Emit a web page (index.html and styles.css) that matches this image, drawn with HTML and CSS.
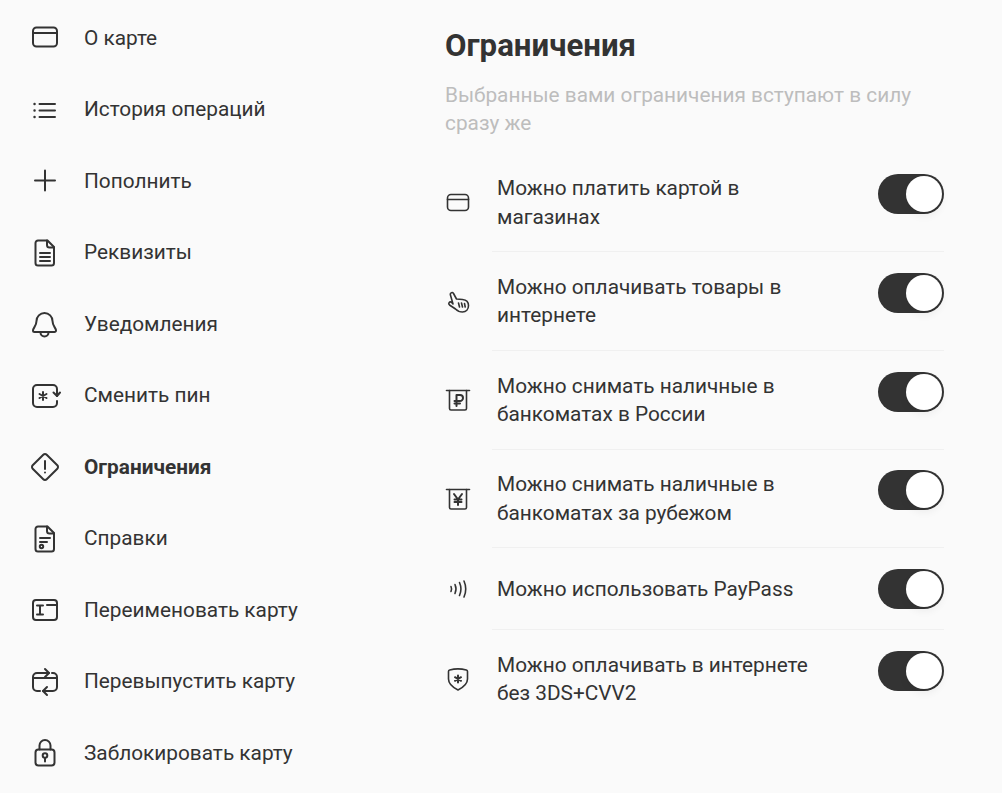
FILE: index.html
```html
<!DOCTYPE html>
<html lang="ru">
<head>
  <meta charset="UTF-8" />
  <title>Ограничения</title>
  <link rel="stylesheet" href="styles.css">
</head>
<body>
  <div class="page">

    <!-- menu -->
    <nav class="menu">
      <a class="menu-item">
        <svg class="icon" viewBox="0 0 28 28"><rect x="2" y="3.500" width="24" height="19" rx="3.500"/><path d="M2 9h24"/></svg>
        <span>О карте</span>
      </a>
      <a class="menu-item">
        <svg class="icon" viewBox="0 0 28 28"><path d="M8.500 8h15.500M8.500 14.500h15.500M8.500 21h15.500"/><path class="dots" d="M3.500 8h.1M3.500 14.500h.1M3.500 21h.1"/></svg>
        <span>История операций</span>
      </a>
      <a class="menu-item">
        <svg class="icon" viewBox="0 0 28 28"><path d="M14 3.500v20M4 13.500h20"/></svg>
        <span>Пополнить</span>
      </a>
      <a class="menu-item">
        <svg class="icon" viewBox="0 0 28 28"><path d="M7 1.500h9.500l6.500 6.500v16a2.500 2.500 0 0 1-2.500 2.500H7A2.500 2.500 0 0 1 4.500 24V4A2.500 2.500 0 0 1 7 1.500z"/><path d="M16 1.500V6a2.500 2.500 0 0 0 2.500 2.500H23M9 14h10M9 18h10M9 22h10"/></svg>
        <span>Реквизиты</span>
      </a>
      <a class="menu-item">
        <svg class="icon" viewBox="0 0 28 28"><path d="M5.500 11a8 8 0 0 1 16 0c0 5 3.500 7 3.500 9.500a1.500 1.500 0 0 1-1.500 1.500h-20A1.500 1.500 0 0 1 2 20.500C2 18 5.500 16 5.500 11z"/><path d="M9.500 22.500a4 4 0 0 0 8 0"/></svg>
        <span>Уведомления</span>
      </a>
      <a class="menu-item">
        <svg class="icon" viewBox="0 0 28 28"><path d="M26 14V7a4 4 0 0 0-4-4H6a4 4 0 0 0-4 4v14a4 4 0 0 0 4 4h16a4 4 0 0 0 4-4v-2"/><path d="M22.500 10.500 26 14l3-3.500"/><path class="thick" d="M12 10v8M8.500 12l7 4M15.500 12l-7 4"/></svg>
        <span>Сменить пин</span>
      </a>
      <a class="menu-item">
        <svg class="icon" viewBox="0 0 28 28"><path d="M12.300 1.700a2.400 2.400 0 0 1 3.400 0l10.600 10.600a2.400 2.400 0 0 1 0 3.400L15.700 26.300a2.400 2.400 0 0 1-3.400 0L1.700 15.700a2.400 2.400 0 0 1 0-3.400z"/><path d="M14 8v8M14 19.500v.1"/></svg>
        <span class="current">Ограничения</span>
      </a>
      <a class="menu-item">
        <svg class="icon" viewBox="0 0 28 28"><path d="M7 1.500h9.500l6.500 6.500v16a2.500 2.500 0 0 1-2.500 2.500H7A2.500 2.500 0 0 1 4.500 24V4A2.500 2.500 0 0 1 7 1.500z"/><path d="M16 1.500V6a2.500 2.500 0 0 0 2.500 2.500H23M9 13h10M9 17h7"/><circle cx="10.500" cy="21.500" r="1.700"/></svg>
        <span>Справки</span>
      </a>
      <a class="menu-item">
        <svg class="icon" viewBox="0 0 28 28"><path d="M26 9V7a3 3 0 0 0-3-3H5a3 3 0 0 0-3 3v14a3 3 0 0 0 3 3h18a3 3 0 0 0 3-3V9H16"/><path d="M6 9.500h6M6 18.500h6M9 9.500v9"/></svg>
        <span>Переименовать карту</span>
      </a>
      <a class="menu-item">
        <svg class="icon" viewBox="0 0 28 28"><path d="M18 5H6a4 4 0 0 0-4 4v10a4 4 0 0 0 4 4h3M12 23h10a4 4 0 0 0 4-4V9a4 4 0 0 0-4-4h-1M2 10h24"/><path d="M14 1l4 4-4 4M16 19l-4 4 4 4"/></svg>
        <span>Перевыпустить карту</span>
      </a>
      <a class="menu-item">
        <svg class="icon" viewBox="0 0 28 28"><rect x="4.500" y="10.500" width="19" height="16" rx="3"/><path d="M8.500 10.500V6.500a5.500 5.500 0 0 1 11 0v4"/><circle cx="14" cy="16.500" r="2.300"/><path d="M14 19v3.500"/></svg>
        <span>Заблокировать карту</span>
      </a>
    </nav>

    <!-- limits -->
    <main class="limits">
      <h1>Ограничения</h1>
      <p class="hint">Выбранные вами ограничения вступают в силу сразу же</p>

      <div class="limit">
        <svg class="limit-icon" viewBox="0 0 24 24"><rect x="1.500" y="3.500" width="21" height="16" rx="3.500"/><path d="M1.500 8.500h21"/></svg>
        <div class="limit-body">
          <div class="limit-text">Можно платить картой в магазинах</div>
          <div class="toggle"><div class="knob"></div></div>
        </div>
      </div>

      <div class="limit">
        <svg class="limit-icon" viewBox="0 0 24 24"><path d="M7 14 4.300 4.500a1.700 1.700 0 0 1 3.200-1L10.500 9l6 .5c3.500.4 6 2.300 6 6 0 4-2.500 6.500-6 6.500-3.500 0-5-1-7-3l-6-4c-1.800-1.500 0-3.800 2-2.800z"/><path d="M12.500 13l1 4M15.500 13l1 4M18.500 13.500l.7 3.500"/></svg>
        <div class="limit-body">
          <div class="limit-text">Можно оплачивать товары в интернете</div>
          <div class="toggle"><div class="knob"></div></div>
        </div>
      </div>

      <div class="limit">
        <svg class="limit-icon" viewBox="0 0 24 24"><path d="M.5 2.500h23"/><path d="M3.500 2.500v18a1.500 1.500 0 0 0 1.500 1.500h14a1.500 1.500 0 0 0 1.500-1.500v-18"/><path class="thick" d="M10.500 18V7h3.500a2.800 2.800 0 0 1 0 6H8.500M8.500 15.500H14"/></svg>
        <div class="limit-body">
          <div class="limit-text">Можно снимать наличные в банкоматах в России</div>
          <div class="toggle"><div class="knob"></div></div>
        </div>
      </div>

      <div class="limit">
        <svg class="limit-icon" viewBox="0 0 24 24"><path d="M.5 2.500h23"/><path d="M3.500 2.500v18a1.500 1.500 0 0 0 1.500 1.500h14a1.500 1.500 0 0 0 1.500-1.500v-18"/><path class="thick" d="M8 7l4 5.500L16 7M12 12.500V18M8.500 12.500h7M8.500 15h7"/></svg>
        <div class="limit-body">
          <div class="limit-text">Можно снимать наличные в банкоматах за рубежом</div>
          <div class="toggle"><div class="knob"></div></div>
        </div>
      </div>

      <div class="limit">
        <svg class="limit-icon" viewBox="0 0 24 24"><path d="M5 9.500a6 6 0 0 1 0 5M9 7.500a11 11 0 0 1 0 9M13.500 5.500a16 16 0 0 1 0 13M18 4a20 20 0 0 1 0 16"/></svg>
        <div class="limit-body">
          <div class="limit-text">Можно использовать PayPass</div>
          <div class="toggle"><div class="knob"></div></div>
        </div>
      </div>

      <div class="limit">
        <svg class="limit-icon" viewBox="0 0 24 24"><path d="M2.500 4.500c0-.8.500-1.300 1.200-1.500C9 1.500 15 1.500 20.300 3c.7.200 1.200.7 1.200 1.500V12c0 5-4.500 8.500-9.500 11-5-2.500-9.500-6-9.500-11z"/><path class="thick" d="M12 8.500v7M9 10.200l6 3.600M15 10.200l-6 3.600"/></svg>
        <div class="limit-body limit-body-last">
          <div class="limit-text">Можно оплачивать в интернете без 3DS+CVV2</div>
          <div class="toggle"><div class="knob"></div></div>
        </div>
      </div>
    </main>

  </div>
</body>
</html>
```

FILE: styles.css
```css
:root {
  --ink: #333333;
  --bg: #fafafa;
}

body {
  margin: 0;
  background: var(--bg);
  color: var(--ink);
  font-family: Roboto, sans-serif;
  font-size: 20.8px;
  line-height: 28.6px;
  overflow: hidden;
}

.page {
  display: flex;
  height: 793px;
}

/* menu */
.menu {
  width: 445px;
  padding: 2.5px 0 0 31px;
  box-sizing: border-box;
  flex-shrink: 0;
}
.menu-item {
  display: flex;
  align-items: center;
  gap: 25px;
  height: 71.5px;
}
.current { font-weight: 700; }

.icon,
.limit-icon {
  fill: none;
  stroke: var(--ink);
  stroke-width: 2;
  stroke-linecap: round;
  stroke-linejoin: round;
  flex-shrink: 0;
  overflow: visible;
}
.icon { width: 28px; height: 28px; }
.dots { stroke-width: 2.4; }
.thick { stroke-width: 2; }

/* limits */
.limits {
  width: 499px;
  padding-top: 26px;
}
h1 {
  margin: 0 0 15px;
  font-size: 31.2px;
  line-height: 40px;
  font-weight: 700;
}
.hint {
  margin: 0 0 16.65px;
  color: #bdbdbd;
  line-height: 28px;
}
.limit {
  display: flex;
  align-items: center;
}
.limit-icon {
  width: 24px;
  height: 24px;
  margin-right: 22px;
  margin-left: 1px;
  stroke-width: 1.6;
}
.limit-body {
  flex: 1;
  display: flex;
  justify-content: space-between;
  padding: 20.5px 0 20px;
  border-bottom: 1px solid #f0f0f0;
}
.limit-body-last {
  padding-top: 21px;
  border-bottom: 0;
}
.limit-text {
  width: 330px;
  margin-left: 5px;
  align-self: center;
}
.toggle {
  display: flex;
  justify-content: flex-end;
  align-items: center;
  align-self: flex-start;
  width: 66px;
  height: 40px;
  padding: 2px;
  box-sizing: border-box;
  border-radius: 20px;
  background: var(--ink);
}
.knob {
  width: 36px;
  height: 36px;
  border-radius: 50%;
  background: #ffffff;
  box-shadow: 0 4px 8px rgba(0, 0, 0, 0.06);
}
```
